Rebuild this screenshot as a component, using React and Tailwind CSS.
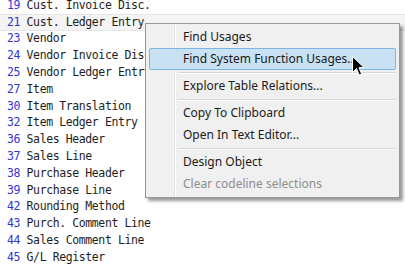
const rows = [
  ["19", "Cust. Invoice Disc."],
  ["21", "Cust. Ledger Entry"],
  ["23", "Vendor"],
  ["24", "Vendor Invoice Disc."],
  ["25", "Vendor Ledger Entry"],
  ["27", "Item"],
  ["30", "Item Translation"],
  ["32", "Item Ledger Entry"],
  ["36", "Sales Header"],
  ["37", "Sales Line"],
  ["38", "Purchase Header"],
  ["39", "Purchase Line"],
  ["42", "Rounding Method"],
  ["43", "Purch. Comment Line"],
  ["44", "Sales Comment Line"],
  ["45", "G/L Register"],
];

const menu = [
  { label: "Find Usages" },
  { label: "Find System Function Usages...", active: true },
  { sep: true },
  { label: "Explore Table Relations..." },
  { sep: true },
  { label: "Copy To Clipboard" },
  { label: "Open In Text Editor..." },
  { sep: true },
  { label: "Design Object" },
  { label: "Clear codeline selections", disabled: true },
];

function Cursor() {
  return (
    <svg
      className="absolute left-[352px] top-[56px]"
      width="13"
      height="21"
      viewBox="0 0 13 21"
    >
      <path
        d="M0.5 0.5 L0.5 16.5 L4.5 12.5 L7.2 19 L9.6 18 L7 11.6 L12 11.6 Z"
        fill="#000"
        stroke="#fff"
        strokeWidth="1"
        strokeLinejoin="miter"
      />
    </svg>
  );
}

export default function App() {
  return (
    <div className="relative w-[405px] h-[265px] overflow-hidden bg-white">
      <div className="mt-[-3px] font-['DejaVu_Sans_Mono',monospace] text-[11.5px] tracking-[-0.4px] text-[#1e1e1e]">
        {rows.map(([num, name], i) => (
          <div
            key={num}
            className={
              "h-[16.8px] flex items-center pl-[7px] whitespace-pre " +
              (i === 1 ? "bg-[#f4f4f4] border-y border-[#e6e6e6]" : "")
            }
          >
            <span className="text-[#3434d4]">{num}</span>
            <span> {name}</span>
          </div>
        ))}
      </div>

      <div className="absolute left-[145px] top-[23px] w-[255px] border border-[#979797] bg-[#f0f0f0] px-[3px] py-[2px] shadow-[3px_3px_3px_rgba(0,0,0,0.4)] font-['Noto_Sans',sans-serif] text-[12px] text-[#1a1a1a]">
        <div className="absolute left-[28px] top-0 bottom-0 w-px bg-[#e2e3e3]" />
        <div className="absolute left-[29px] top-0 bottom-0 w-px bg-white" />
        {menu.map((m, i) =>
          m.sep ? (
            <div key={i} className="relative h-[5px] ml-[29px] pt-[2px]">
              <div className="h-px bg-[#d7d7d7]" />
              <div className="h-px bg-white" />
            </div>
          ) : (
            <div
              key={i}
              className={
                "relative h-[22px] flex items-center pl-[33px] border rounded-[2px] " +
                (m.active
                  ? "bg-[#c8e1f3] border-[#7db5e3]"
                  : "border-transparent") +
                (m.disabled ? " text-[#8d8d8d]" : "")
              }
            >
              {m.label}
            </div>
          )
        )}
      </div>

      <Cursor />
    </div>
  );
}
